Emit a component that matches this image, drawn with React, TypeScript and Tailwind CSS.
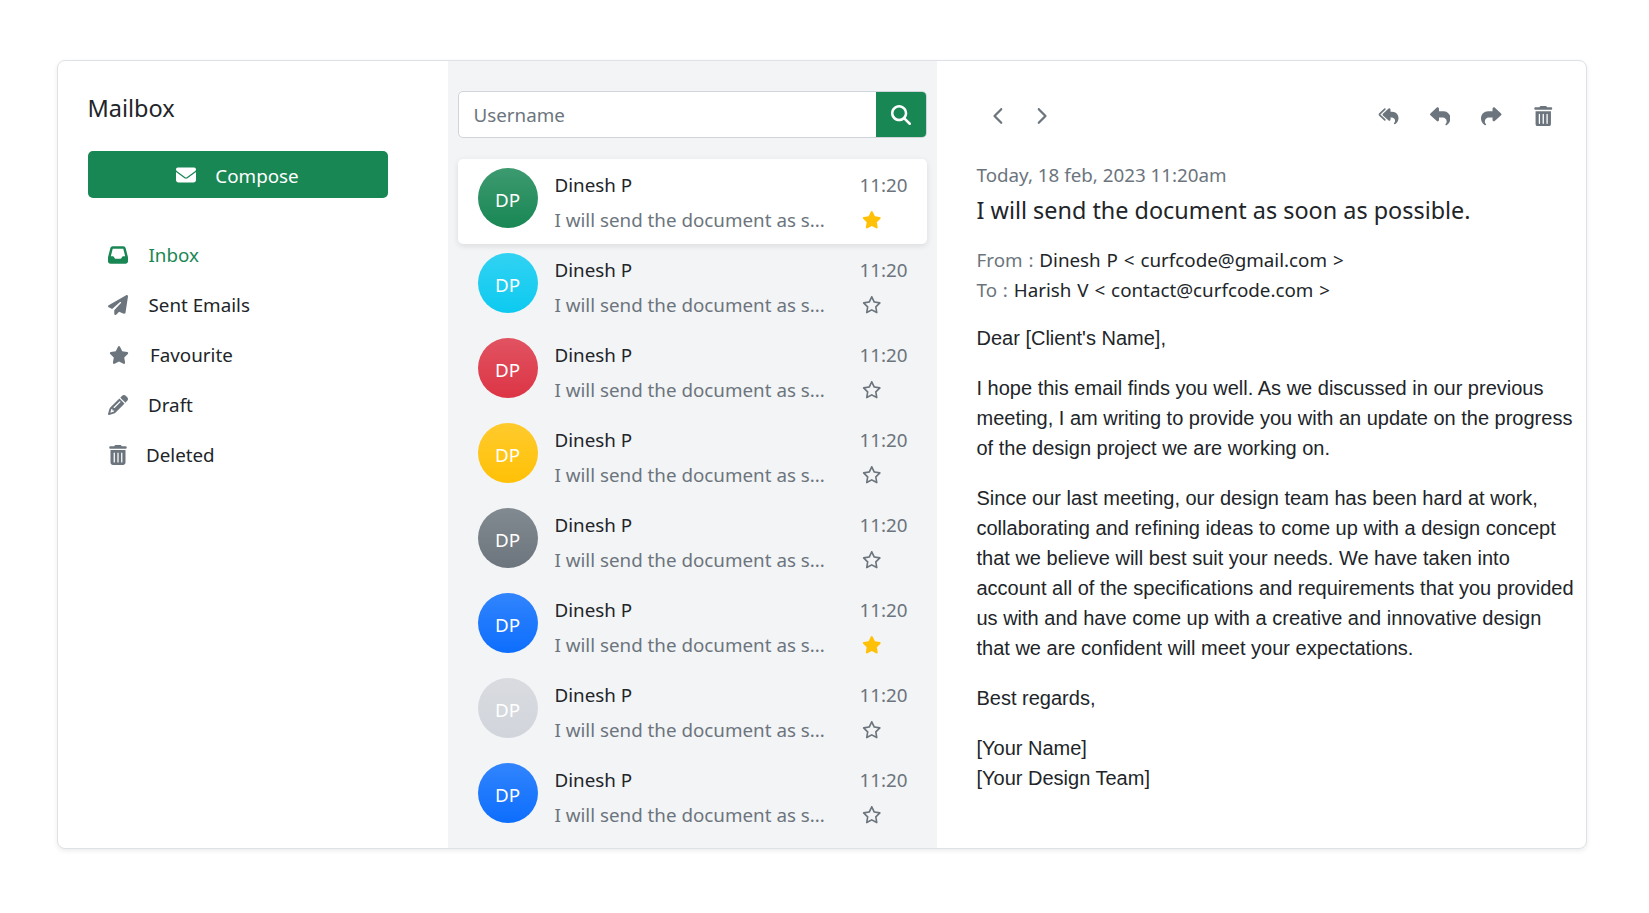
import { FaInbox, FaPaperPlane, FaStar, FaRegStar, FaPencil, FaTrashCan, FaReplyAll, FaReply, FaShare, FaEnvelope, FaMagnifyingGlass, FaChevronLeft, FaChevronRight } from "react-icons/fa6";

const nav = [
  { label: "Inbox", Icon: FaInbox, active: true, gap: "gap-[20.5px]", pad: "pl-[20.5px]" },
  { label: "Sent Emails", Icon: FaPaperPlane, active: false, gap: "gap-[20.5px]", pad: "pl-[20.5px]" },
  { label: "Favourite", Icon: FaStar, active: false, gap: "gap-[21px]", pad: "pl-[21.5px]" },
  { label: "Draft", Icon: FaPencil, active: false, gap: "gap-[20px]", pad: "pl-[20.5px]" },
  { label: "Deleted", Icon: FaTrashCan, active: false, gap: "gap-[18px]", pad: "pl-[20.5px]" },
];

const mails = [
  { bg: "bg-[linear-gradient(180deg,#3d9a70,#198754)]", starred: true, active: true },
  { bg: "bg-[linear-gradient(180deg,#31d2f2,#0dcaf0)]", starred: false, active: false },
  { bg: "bg-[linear-gradient(180deg,#e15361,#dc3545)]", starred: false, active: false },
  { bg: "bg-[linear-gradient(180deg,#ffca2c,#ffc107)]", starred: false, active: false },
  { bg: "bg-[linear-gradient(180deg,#828a91,#6c757d)]", starred: false, active: false },
  { bg: "bg-[linear-gradient(180deg,#3184fd,#0d6efd)]", starred: true, active: false },
  { bg: "bg-[linear-gradient(180deg,#d9dbe0,#d1d5db)]", starred: false, active: false },
  { bg: "bg-[linear-gradient(180deg,#3184fd,#0d6efd)]", starred: false, active: false },
];

export default function App() {
  return (
    <div className="min-h-screen bg-white pl-[56.5px] pt-[60px] font-['Noto_Sans',sans-serif] text-[18.8px] leading-[30px] text-[#212529]">
      <div className="flex h-[789px] w-[1530px] overflow-hidden rounded-[8px] border border-[#dee2e6] bg-white shadow-[0_2px_5px_rgba(0,0,0,0.08)]">
        {/* Sidebar */}
        <aside className="flex w-[390px] shrink-0 flex-col px-[30px] pt-[32px]">
          <h1 className="text-[23.5px] leading-[30px]">Mailbox</h1>
          <button className="mt-[28px] flex h-[47px] w-[300px] items-center justify-center gap-[19px] rounded-[5px] bg-[#198754] text-white">
            <FaEnvelope className="text-[20px]" />
            <span className="pt-[2px]">Compose</span>
          </button>
          <nav className="mt-[32px] flex flex-col">
            {nav.map(({ label, Icon, active, gap, pad }) => (
              <a key={label} className={`flex h-[50px] items-center ${pad} ${gap} ${active ? "text-[#198754]" : ""}`}>
                <Icon className={`shrink-0 text-[20px] ${active ? "text-[#198754]" : "text-[#6c757d]"}`} />
                <span>{label}</span>
              </a>
            ))}
          </nav>
        </aside>

        {/* List */}
        <section className="flex w-[489px] shrink-0 flex-col bg-[#f3f4f6] px-[10px] pt-[30px]">
          <div className="flex h-[47px] w-[469px] overflow-hidden rounded-[5px] border border-[#ced4da] bg-white">
            <div className="flex flex-1 items-center pl-[15px] pt-[1px] text-[#6c757d]">Username</div>
            <div className="flex w-[50px] items-center justify-center bg-[#198754] text-white">
              <FaMagnifyingGlass className="text-[20px]" />
            </div>
          </div>
          <div className="mt-[21px] flex flex-col">
            {mails.map((m, i) => (
              <div key={i} className={`flex h-[85px] w-[469px] items-start rounded-[5px] pl-[20px] pr-[19px] pt-[9px] ${m.active ? "bg-white shadow-[0_2px_6px_rgba(0,0,0,0.1)]" : ""}`}>
                <div className={`flex h-[60px] w-[60px] shrink-0 items-center justify-center rounded-full pt-[3px] text-white ${m.bg}`}>DP</div>
                <div className="ml-[17px] min-w-0 flex-1 pt-[2px]">
                  <div className="flex justify-between">
                    <span>Dinesh P</span>
                    <span className="text-[#6c757d]">11:20</span>
                  </div>
                  <div className="mt-[5px] flex items-center justify-between">
                    <span className="text-[#6c757d]">I will send the document as s...</span>
                    <span className="mr-[26px] flex">
                      {m.starred ? <FaStar className="text-[19.5px] text-[#ffc107]" /> : <FaRegStar className="text-[19.5px] text-[#6c757d]" />}
                    </span>
                  </div>
                </div>
              </div>
            ))}
          </div>
        </section>

        {/* Message */}
        <section className="min-w-0 flex-1 pl-[40px] pr-[10px] pt-[37px]">
          <div className="flex h-[36px] items-center justify-between text-[#6c757d]">
            <div className="ml-[13px] flex items-center gap-[24px]">
              <FaChevronLeft className="text-[18px]" />
              <FaChevronRight className="text-[18px]" />
            </div>
            <div className="mr-[22.5px] flex items-center gap-[31px]">
              <FaReplyAll className="text-[20.5px]" />
              <FaReply className="text-[20.5px]" />
              <FaShare className="text-[20.5px]" />
              <FaTrashCan className="text-[20.5px]" />
            </div>
          </div>
          <p className="mt-[26px] text-[#6c757d]">Today, 18 feb, 2023 11:20am</p>
          <h2 className="mt-[2px] text-[23.4px] leading-[36px]">I will send the document as soon as possible.</h2>
          <p className="mt-[17px] [word-spacing:1px]"><span className="text-[#6c757d]">From : </span>Dinesh P &lt; curfcode@gmail.com &gt;</p>
          <p className="[word-spacing:1px]"><span className="text-[#6c757d]">To : </span>Harish V &lt; contact@curfcode.com &gt;</p>
          <div className="mt-[18px] font-['Liberation_Sans',sans-serif] text-[20px]">
            <p>Dear [Client's Name],</p>
            <p className="mt-[20px]">I hope this email finds you well. As we discussed in our previous meeting, I am writing to provide you with an update on the progress of the design project we are working on.</p>
            <p className="mt-[20px]">Since our last meeting, our design team has been hard at work, collaborating and refining ideas to come up with a design concept that we believe will best suit your needs. We have taken into account all of the specifications and requirements that you provided us with and have come up with a creative and innovative design that we are confident will meet your expectations.</p>
            <p className="mt-[20px]">Best regards,</p>
            <p className="mt-[20px]">[Your Name]<br />[Your Design Team]</p>
          </div>
        </section>
      </div>
    </div>
  );
}
